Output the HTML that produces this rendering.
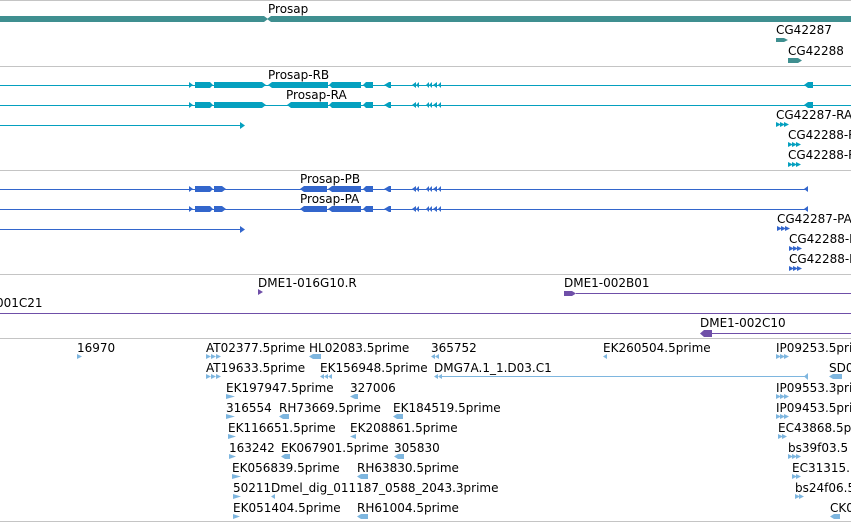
<!DOCTYPE html>
<html><head><meta charset="utf-8"><style>
html,body{margin:0;padding:0;background:#fff;}
svg{display:block;}
text{font-family:"DejaVu Sans","Liberation Sans",sans-serif;font-size:12px;fill:#000;}
</style></head><body>
<svg width="851" height="522" viewBox="0 0 851 522" xmlns="http://www.w3.org/2000/svg">
<g stroke="#c4c4c4" stroke-width="1">
<line x1="0" y1="0.5" x2="851" y2="0.5"/>
<line x1="0" y1="66.5" x2="851" y2="66.5"/>
<line x1="0" y1="170.5" x2="851" y2="170.5"/>
<line x1="0" y1="274.5" x2="851" y2="274.5"/>
<line x1="0" y1="338.5" x2="851" y2="338.5"/>
<line x1="0" y1="521.5" x2="851" y2="521.5"/>
</g>
<!-- Gene track -->
<rect x="0" y="16" width="264" height="6" fill="#3f8f90"/>
<rect x="271" y="16" width="580" height="6" fill="#3f8f90"/>
<polygon points="264,16 268,19 264,22" fill="#3f8f90"/><polygon points="271,16 267,19 271,22" fill="#3f8f90"/>
<text x="268" y="13">Prosap</text>
<text x="776" y="34">CG42287</text>
<polygon points="776,38 784,38 788,40 784,42 776,42" fill="#3f8f90"/>
<text x="788" y="55">CG42288</text>
<polygon points="788,58 798,58 802,60.5 798,63 788,63" fill="#3f8f90"/>
<!-- Transcripts teal -->
<g fill="#05a0bf" stroke="#05a0bf">
<line x1="0" y1="85.5" x2="851" y2="85.5" stroke-width="1"/>
<line x1="0" y1="105.5" x2="851" y2="105.5" stroke-width="1"/>
<line x1="0" y1="125.5" x2="243" y2="125.5" stroke-width="1"/>
</g>
<g fill="#05a0bf">
<polygon points="189,82 193,85 189,88"/><polygon points="189,102 193,105 189,108"/>
<polygon points="240,122 245,125.5 240,129"/>
<rect x="195" y="82" width="15" height="6"/><polygon points="210,82 213,85 210,88"/>
<rect x="214" y="82" width="48" height="6"/><polygon points="262,82 266,85 262,88"/>
<polygon points="268,85 272,82 328,82 328,88 272,88"/>
<polygon points="329,85 332,82 361,82 361,88 332,88"/>
<polygon points="363,85 366,82 373,82 373,88 366,88"/>
<polygon points="384,85 389,82 391,82 391,88 389,88"/>
<polygon points="412,85 416,82 416,88"/><polygon points="416,85 419,82 419,88"/>
<polygon points="426,85 429,82 429,88"/><polygon points="429,85 432,82 432,88"/><polygon points="433,85 437,82 437,88"/><polygon points="438,85 441,82 441,88"/>
<rect x="195" y="102" width="15" height="6"/><polygon points="210,102 213,105 210,108"/>
<rect x="214" y="102" width="48" height="6"/><polygon points="262,102 266,105 262,108"/>
<polygon points="287,105 291,102 328,102 328,108 291,108"/>
<polygon points="329,105 332,102 361,102 361,108 332,108"/>
<polygon points="363,105 366,102 373,102 373,108 366,108"/>
<polygon points="384,105 389,102 391,102 391,108 389,108"/>
<polygon points="412,105 416,102 416,108"/><polygon points="416,105 419,102 419,108"/>
<polygon points="426,105 429,102 429,108"/><polygon points="429,105 432,102 432,108"/><polygon points="433,105 437,102 437,108"/><polygon points="438,105 441,102 441,108"/>
<polygon points="804,85 808,82 813,82 813,88 808,88"/>
<polygon points="804,105 808,102 813,102 813,108 808,108"/>
<polygon points="776,122 781,124.5 776,127"/><polygon points="780,122 785,124.5 780,127"/><polygon points="784,122 789,124.5 784,127"/>
<polygon points="788,142 793,144.5 788,147"/><polygon points="792,142 797,144.5 792,147"/><polygon points="796,142 801,144.5 796,147"/>
<polygon points="788,162 793,164.5 788,167"/><polygon points="792,162 797,164.5 792,167"/><polygon points="796,162 801,164.5 796,167"/>
</g>
<text x="268" y="79">Prosap-RB</text>
<text x="286" y="99">Prosap-RA</text>
<text x="776" y="119">CG42287-RA</text>
<text x="788" y="139">CG42288-RA</text>
<text x="788" y="159">CG42288-RB</text>
<!-- Transcripts blue -->
<g stroke="#3366cc" stroke-width="1">
<line x1="0" y1="189.5" x2="808" y2="189.5"/>
<line x1="0" y1="209.5" x2="808" y2="209.5"/>
<line x1="0" y1="229.5" x2="243" y2="229.5"/>
</g>
<g fill="#3366cc">
<polygon points="189,186 193,189 189,192"/><polygon points="189,206 193,209 189,212"/>
<polygon points="240,226 245,229.5 240,233"/>
<rect x="195" y="186" width="15" height="6"/><polygon points="210,186 213,189 210,192"/>
<rect x="214" y="186" width="8" height="6"/><polygon points="222,186 226,189 222,192"/>
<rect x="195" y="206" width="15" height="6"/><polygon points="210,206 213,209 210,212"/>
<rect x="214" y="206" width="8" height="6"/><polygon points="222,206 226,209 222,212"/>
<polygon points="300,189 304,186 327,186 327,192 304,192"/>
<polygon points="328,189 332,186 361,186 361,192 332,192"/>
<polygon points="363,189 366,186 373,186 373,192 366,192"/>
<polygon points="384,189 389,186 391,186 391,192 389,192"/>
<polygon points="412,189 416,186 416,192"/><polygon points="416,189 419,186 419,192"/>
<polygon points="426,189 429,186 429,192"/><polygon points="429,189 432,186 432,192"/><polygon points="433,189 437,186 437,192"/><polygon points="438,189 441,186 441,192"/>
<polygon points="300,209 304,206 327,206 327,212 304,212"/>
<polygon points="328,209 332,206 361,206 361,212 332,212"/>
<polygon points="363,209 366,206 373,206 373,212 366,212"/>
<polygon points="384,209 389,206 391,206 391,212 389,212"/>
<polygon points="412,209 416,206 416,212"/><polygon points="416,209 419,206 419,212"/>
<polygon points="426,209 429,206 429,212"/><polygon points="429,209 432,206 432,212"/><polygon points="433,209 437,206 437,212"/><polygon points="438,209 441,206 441,212"/>
<polygon points="804,189 808,186 808,192"/><polygon points="804,209 808,206 808,212"/>
<polygon points="777,226 782,228.5 777,231"/><polygon points="781,226 786,228.5 781,231"/><polygon points="785,226 790,228.5 785,231"/>
<polygon points="789,246 794,248.5 789,251"/><polygon points="793,246 798,248.5 793,251"/><polygon points="797,246 802,248.5 797,251"/>
<polygon points="789,266 794,268.5 789,271"/><polygon points="793,266 798,268.5 793,271"/><polygon points="797,266 802,268.5 797,271"/>
</g>
<text x="300" y="183">Prosap-PB</text>
<text x="300" y="203">Prosap-PA</text>
<text x="777" y="223">CG42287-PA</text>
<text x="789" y="243">CG42288-PA</text>
<text x="789" y="263">CG42288-PB</text>
<!-- clones purple -->
<g fill="#6f4fa8" stroke="#6f4fa8">
<polygon points="258,289 263,292 258,295" stroke="none"/>
<polygon points="564,291 572,291 576,293.5 572,296 564,296" stroke="none"/>
<line x1="576" y1="293.5" x2="851" y2="293.5" stroke-width="1"/>
<line x1="0" y1="313.5" x2="851" y2="313.5" stroke-width="1"/>
<polygon points="700,333.5 704,330 712,330 712,337 704,337" stroke="none"/>
<line x1="712" y1="333.5" x2="851" y2="333.5" stroke-width="1"/>
</g>
<text x="258" y="287">DME1-016G10.R</text>
<text x="564" y="287">DME1-002B01</text>
<text x="-4" y="307">001C21</text>
<text x="700" y="327">DME1-002C10</text>
<!-- ESTs -->
<g fill="#7eb6df">
<polygon points="77,354 82,356.5 77,359"/>
<polygon points="206,354 211,356.5 206,359"/><polygon points="211,354 216,356.5 211,359"/><polygon points="216,354 221,356.5 216,359"/>
<polygon points="309,356.5 313,354 321,354 321,359 313,359"/>
<polygon points="431,356.5 435,354 435,359"/><polygon points="435,356.5 439,354 439,359"/>
<polygon points="603,356.5 607,354 607,359"/>
<polygon points="776,354 781,356.5 776,359"/><polygon points="780,354 785,356.5 780,359"/><polygon points="784,354 789,356.5 784,359"/>
<polygon points="206,374 211,376.5 206,379"/><polygon points="211,374 216,376.5 211,379"/><polygon points="216,374 221,376.5 216,379"/>
<polygon points="320,376.5 324,374 324,379"/><polygon points="324,376.5 328,374 328,379"/><polygon points="328,376.5 332,374 332,379"/>
<polygon points="434,376.5 438,374 438,379"/><polygon points="438,376.5 442,374 442,379"/>
<rect x="442" y="376" width="364" height="1"/><polygon points="804,376.5 808,373 808,380"/>
<polygon points="829,376.5 833,374 842,374 842,379 833,379"/>
<polygon points="226,394 235,396.5 226,399"/>
<polygon points="350,396.5 355,394 358,394 358,399 355,399"/>
<polygon points="776,394 781,396.5 776,399"/><polygon points="780,394 785,396.5 780,399"/><polygon points="784,394 789,396.5 784,399"/>
<polygon points="226,414 235,416.5 226,419"/>
<polygon points="279,416.5 283,414 289,414 289,419 283,419"/>
<polygon points="393,416.5 397,414 403,414 403,419 397,419"/>
<polygon points="776,414 781,416.5 776,419"/><polygon points="780,414 785,416.5 780,419"/><polygon points="784,414 789,416.5 784,419"/>
<polygon points="228,434 236,436.5 228,439"/>
<polygon points="350,436.5 356,434 356,439"/>
<polygon points="778,434 783,436.5 778,439"/><polygon points="782,434 787,436.5 782,439"/>
<polygon points="229,454 236,456.5 229,459"/>
<polygon points="281,456.5 285,454 290,454 290,459 285,459"/>
<polygon points="394,456.5 398,454 404,454 404,459 398,459"/>
<polygon points="788,454 793,456.5 788,459"/><polygon points="792,454 797,456.5 792,459"/><polygon points="796,454 801,456.5 796,459"/>
<polygon points="232,474 241,476.5 232,479"/>
<polygon points="357,476.5 361,474 368,474 368,479 361,479"/>
<polygon points="792,474 797,476.5 792,479"/><polygon points="796,474 801,476.5 796,479"/>
<polygon points="233,494 241,496.5 233,499"/>
<polygon points="271,496.5 275,494 275,499"/>
<polygon points="795,494 800,496.5 795,499"/><polygon points="799,494 804,496.5 799,499"/>
<polygon points="233,514 240,516.5 233,519"/>
<polygon points="357,516.5 361,514 368,514 368,519 361,519"/>
<polygon points="830,516.5 834,514 840,514 840,519 834,519"/>
</g>
<text x="77" y="352">16970</text>
<text x="206" y="352">AT02377.5prime</text>
<text x="309" y="352">HL02083.5prime</text>
<text x="431" y="352">365752</text>
<text x="603" y="352">EK260504.5prime</text>
<text x="776" y="352">IP09253.5prime</text>
<text x="206" y="372">AT19633.5prime</text>
<text x="320" y="372">EK156948.5prime</text>
<text x="434" y="372">DMG7A.1_1.D03.C1</text>
<text x="829" y="372">SD0</text>
<text x="226" y="392">EK197947.5prime</text>
<text x="350" y="392">327006</text>
<text x="776" y="392">IP09553.3prime</text>
<text x="226" y="412">316554</text>
<text x="279" y="412">RH73669.5prime</text>
<text x="393" y="412">EK184519.5prime</text>
<text x="776" y="412">IP09453.5prime</text>
<text x="228" y="432">EK116651.5prime</text>
<text x="350" y="432">EK208861.5prime</text>
<text x="778" y="432">EC43868.5prime</text>
<text x="229" y="452">163242</text>
<text x="281" y="452">EK067901.5prime</text>
<text x="394" y="452">305830</text>
<text x="788" y="452">bs39f03.5</text>
<text x="232" y="472">EK056839.5prime</text>
<text x="357" y="472">RH63830.5prime</text>
<text x="792" y="472">EC31315.</text>
<text x="233" y="492">50211</text>
<text x="271" y="492">Dmel_dig_011187_0588_2043.3prime</text>
<text x="795" y="492">bs24f06.5</text>
<text x="233" y="512">EK051404.5prime</text>
<text x="357" y="512">RH61004.5prime</text>
<text x="830" y="512">CK0</text>
</svg>
</body></html>
